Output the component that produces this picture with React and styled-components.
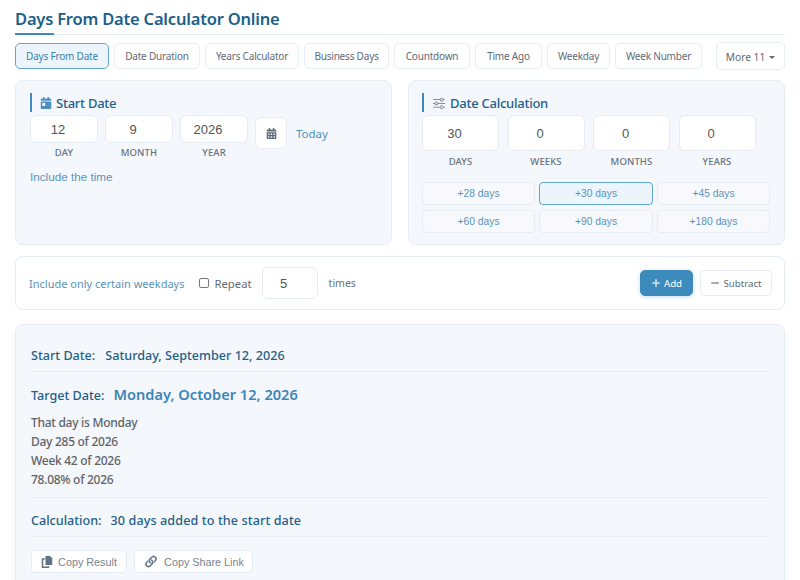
import React from 'react'
import styled, { createGlobalStyle } from 'styled-components'
import { BsSliders, BsLink45Deg, BsPlusLg, BsDashLg } from 'react-icons/bs'
import { FaCalendarAlt, FaCalendarDay } from 'react-icons/fa'

const GlobalStyle = createGlobalStyle`
  html, body { margin: 0; padding: 0; background: #fff; }
  body { height: 580px; overflow: hidden; font-family: "Noto Sans", "Open Sans", sans-serif; color: #555; }
  * { box-sizing: border-box; }
`

const Page = styled.div`
  padding: 9px 15px 0;
  display: flex;
  flex-direction: column;
`

const Title = styled.h1`
  position: relative;
  margin: 0 0 7px;
  height: 26px;
  font-size: 16.5px;
  letter-spacing: -0.2px;
  line-height: 20px;
  font-weight: 600;
  color: #1a5f8a;
  border-bottom: 1px solid #e5ecf4;

  &::after {
    content: '';
    position: absolute;
    left: 0;
    bottom: -1px;
    width: 39px;
    height: 2px;
    background: #3d8bbd;
  }
`

const TabBar = styled.div`
  display: flex;
  align-items: center;
  gap: 5px;
  height: 28px;
  margin-bottom: 10px;
`

const Tab = styled.button`
  height: 26px;
  width: ${p => p.$w}px;
  padding: 0;
  border-radius: 5px;
  font-family: inherit;
  font-size: 10px;
  letter-spacing: -0.2px;
  color: ${p => (p.$active ? '#3d7fa8' : '#5f6b76')};
  background: ${p => (p.$active ? '#edf5fc' : '#fff')};
  border: 1px solid ${p => (p.$active ? '#62a5d0' : '#e6edf5')};
`

const MoreTab = styled(Tab)`
  height: 28px;
  margin-left: auto;
  padding-top: 1px;
  font-size: 10.2px;
  letter-spacing: 0;

  &::after {
    content: '';
    display: inline-block;
    margin-left: 4px;
    vertical-align: 2px;
    border-top: 3px solid #5f6b76;
    border-left: 3px solid transparent;
    border-right: 3px solid transparent;
  }
`

const Columns = styled.div`
  display: grid;
  grid-template-columns: 377px 377px;
  justify-content: space-between;
  margin-bottom: 11px;
`

const Panel = styled.section`
  height: 165px;
  padding: 12px ${p => p.$pad}px;
  background: #f4f7fb;
  border: 1px solid #e6ecf4;
  border-radius: 8px;
`

const PanelTitle = styled.h2`
  display: flex;
  align-items: center;
  gap: ${p => p.$gap}px;
  height: 19px;
  margin: 0 0 3px;
  padding-left: ${p => p.$indent}px;
  border-left: 2px solid #3d8bbd;
  font-size: 13px;
  letter-spacing: -0.25px;
  font-weight: 500;
  color: #1f5f88;

  svg { font-size: 12px; color: ${p => p.$iconColor}; }
`

const DateRow = styled.div`
  display: flex;
  align-items: flex-start;
`

const Field = styled.div`
  display: flex;
  flex-direction: column;
  align-items: center;
  width: ${p => p.$w}px;
  margin-right: ${p => p.$gap}px;
`

const NumberInput = styled.input`
  width: 100%;
  height: ${p => p.$h}px;
  padding: 0 12px 0 0;
  text-align: center;
  font-family: "Liberation Sans", Arial, sans-serif;
  font-size: 13px;
  color: #555;
  background: #fff;
  border: 1px solid #e6ecf4;
  border-radius: 6px;
  outline: none;
`

const FieldLabel = styled.span`
  margin-top: ${p => p.$top}px;
  line-height: 14px;
  font-size: 9.5px;
  font-weight: 500;
  letter-spacing: 0.1px;
  color: #68727c;
  text-transform: uppercase;
`

const CalendarButton = styled.button`
  display: flex;
  align-items: center;
  justify-content: center;
  width: 32px;
  height: 32px;
  margin-top: 2px;
  padding: 0;
  color: #5f6b76;
  font-size: 11px;
  background: #fff;
  border: 1px solid #e6ecf4;
  border-radius: 6px;
`

const TodayLink = styled.a`
  margin: 11px 0 0 9px;
  line-height: 16px;
  font-size: 11.5px;
  color: #4f8fbb;
`

const TimeLink = styled.a`
  display: block;
  margin-top: 9px;
  line-height: 16px;
  font-family: "Liberation Sans", Arial, sans-serif;
  font-size: 11.7px;
  color: #5b93b8;
`

const Presets = styled.div`
  display: grid;
  grid-template-columns: 113px 114px 113px;
  gap: 5px 4px;
  margin-top: 13px;
`

const Preset = styled.button`
  height: 23px;
  padding: 0;
  font-family: "Liberation Sans", Arial, sans-serif;
  font-size: 10.3px;
  color: #5b93b8;
  background: ${p => (p.$active ? '#edf5fc' : '#f7f9fc')};
  border: 1px solid ${p => (p.$active ? '#62a5d0' : '#e6ecf4')};
  border-radius: 4px;
`

const OptionsBar = styled.section`
  display: flex;
  align-items: center;
  height: 54px;
  padding: 0 12px 0 13px;
  margin-bottom: 14px;
  background: #fff;
  border: 1px solid #e6ecf4;
  border-radius: 8px;
`

const WeekdaysLink = styled.a`
  font-size: 11px;
  color: #5b93b8;
`

const RepeatLabel = styled.label`
  display: flex;
  align-items: center;
  gap: 5px;
  margin: 0 10px 0 15px;
  font-size: 11.3px;
  color: #5f6b76;
`

const RepeatBox = styled.span`
  display: block;
  width: 10px;
  height: 10px;
  background: #fff;
  border: 1px solid #777;
  border-radius: 2px;
`

const TimesText = styled.span`
  margin-left: 11px;
  font-size: 10.5px;
  color: #68727c;
`

const Actions = styled.div`
  display: flex;
  gap: 7px;
  margin-left: auto;
`

const ActionButton = styled.button`
  display: flex;
  align-items: center;
  justify-content: center;
  gap: 3px;
  height: 26px;
  width: ${p => p.$w}px;
  padding: 0;
  font-family: inherit;
  font-size: 9.7px;
  border-radius: 5px;
  color: ${p => (p.$primary ? '#fff' : '#5f6b76')};
  background: ${p => (p.$primary ? '#3d8bbd' : '#fff')};
  border: 1px solid ${p => (p.$primary ? '#3d8bbd' : '#e6ecf4')};
  box-shadow: ${p => (p.$primary ? '0 1px 4px rgba(61,139,189,.3)' : 'none')};

  svg {
    font-size: 10px;
    stroke: currentColor;
    stroke-width: 0.7;
  }
`

const ResultPanel = styled.section`
  height: 280px;
  padding: 15px 15px;
  background: #f4f7fb;
  border: 1px solid #e6ecf4;
  border-radius: 8px;
  box-shadow: 0 2px 10px rgba(30, 60, 100, .05);
`

const ResultRow = styled.div`
  display: flex;
  align-items: baseline;
  gap: ${p => p.$gap}px;
  height: ${p => p.$h}px;
  padding-top: ${p => p.$top}px;
  font-size: 12.6px;
  font-weight: 500;
  line-height: 18px;
  color: #1f5f88;
  border-bottom: ${p => (p.$line ? '1px solid #e8edf3' : 'none')};
`

const TargetValue = styled.span`
  font-size: 14.6px;
  font-weight: 600;
  color: #3d85b5;
`

const CalculationValue = styled.span`
  letter-spacing: 0.1px;
`

const Facts = styled.div`
  padding-bottom: 8px;
  border-bottom: 1px solid #e8edf3;
`

const Fact = styled.div`
  font-size: 12px;
  letter-spacing: -0.28px;
  line-height: 19px;
  font-weight: 500;
  color: #5f6368;
`

const CopyRow = styled.div`
  display: flex;
  gap: 7px;
  margin-top: 13px;
`

const CopyButton = styled.button`
  display: flex;
  align-items: center;
  justify-content: center;
  gap: 5px;
  width: ${p => p.$w}px;
  height: 23px;
  padding: 0;
  font-family: "Liberation Sans", Arial, sans-serif;
  font-size: 10.8px;
  color: #78838e;
  background: #fff;
  border: 1px solid #e6ecf4;
  border-radius: 4px;

  svg {
    color: #5f7385;
    font-size: ${p => p.$icon}px;
  }
`

const BoldLink = styled(BsLink45Deg)`
  stroke: currentColor;
  stroke-width: 0.6;
`

function CopyIcon() {
  return (
    <svg width="12" height="12" viewBox="0 0 16 16">
      <path d="M6 0h6l3 3v9H6z" fill="currentColor" />
      <path d="M5 4H2v11h8v-1.500" fill="none" stroke="currentColor" strokeWidth="2" />
    </svg>
  )
}

const tabs = [
  ['Days From Date', 94, true],
  ['Date Duration', 86],
  ['Years Calculator', 94],
  ['Business Days', 85],
  ['Countdown', 76],
  ['Time Ago', 67],
  ['Weekday', 63],
  ['Week Number', 87],
]

const dateFields = [
  ['12', 'Day'],
  ['9', 'Month'],
  ['2026', 'Year'],
]

const amounts = [
  ['30', 'Days'],
  ['0', 'Weeks'],
  ['0', 'Months'],
  ['0', 'Years'],
]

const presets = ['+28 days', '+30 days', '+45 days', '+60 days', '+90 days', '+180 days']

const facts = ['That day is Monday', 'Day 285 of 2026', 'Week 42 of 2026', '78.08% of 2026']

export default function App() {
  return (
    <Page>
      <GlobalStyle />
      <Title>Days From Date Calculator Online</Title>

      <TabBar>
        {tabs.map(([name, w, active]) => (
          <Tab key={name} $w={w} $active={active}>{name}</Tab>
        ))}
        <MoreTab $w={69}>More 11</MoreTab>
      </TabBar>

      <Columns>
        <Panel $pad={14}>
          <PanelTitle $iconColor="#4f8fbb" $indent={8} $gap={4}><FaCalendarDay />Start Date</PanelTitle>
          <DateRow>
            {dateFields.map(([value, label]) => (
              <Field key={label} $w={68} $gap={7}>
                <NumberInput readOnly value={value} $h={28} />
                <FieldLabel $top={3}>{label}</FieldLabel>
              </Field>
            ))}
            <CalendarButton><FaCalendarAlt /></CalendarButton>
            <TodayLink>Today</TodayLink>
          </DateRow>
          <TimeLink>Include the time</TimeLink>
        </Panel>

        <Panel $pad={13}>
          <PanelTitle $iconColor="#5f7385" $indent={9} $gap={5}><BsSliders />Date Calculation</PanelTitle>
          <DateRow>
            {amounts.map(([value, label]) => (
              <Field key={label} $w={77} $gap={8.5}>
                <NumberInput readOnly value={value} $h={36} />
                <FieldLabel $top={4}>{label}</FieldLabel>
              </Field>
            ))}
          </DateRow>
          <Presets>
            {presets.map(p => (
              <Preset key={p} $active={p === '+30 days'}>{p}</Preset>
            ))}
          </Presets>
        </Panel>
      </Columns>

      <OptionsBar>
        <WeekdaysLink>Include only certain weekdays</WeekdaysLink>
        <RepeatLabel><RepeatBox />Repeat</RepeatLabel>
        <Field $w={56} $gap={0}>
          <NumberInput readOnly value="5" $h={32} />
        </Field>
        <TimesText>times</TimesText>
        <Actions>
          <ActionButton $primary $w={53}><BsPlusLg />Add</ActionButton>
          <ActionButton $w={72}><BsDashLg />Subtract</ActionButton>
        </Actions>
      </OptionsBar>

      <ResultPanel>
        <ResultRow $gap={10} $h={32} $top={7} $line>
          <span>Start Date:</span>
          <span>Saturday, September 12, 2026</span>
        </ResultRow>
        <ResultRow $gap={9} $h={41} $top={13}>
          <span>Target Date:</span>
          <TargetValue>Monday, October 12, 2026</TargetValue>
        </ResultRow>
        <Facts>
          {facts.map(f => <Fact key={f}>{f}</Fact>)}
        </Facts>
        <ResultRow $gap={9} $h={39} $top={14} $line>
          <span>Calculation:</span>
          <CalculationValue>30 days added to the start date</CalculationValue>
        </ResultRow>
        <CopyRow>
          <CopyButton $w={96}><CopyIcon />Copy Result</CopyButton>
          <CopyButton $w={119} $icon={16}><BoldLink />Copy Share Link</CopyButton>
        </CopyRow>
      </ResultPanel>
    </Page>
  )
}
